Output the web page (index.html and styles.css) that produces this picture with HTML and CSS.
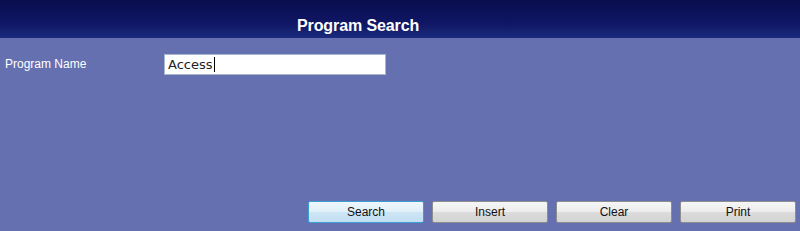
FILE: index.html
```html
<!DOCTYPE html>
<html>

<head>
    <meta charset="UTF-8">
    <title>Program Search</title>
    <link rel="stylesheet" href="styles.css">
</head>

<body>
    <div class="header">
        <h1 class="title">Program Search</h1>
    </div>
    <div class="main">
        <div class="row">
            <label class="label" for="progName">Program Name</label>
            <div class="field"><span class="txt">Access</span><span class="caret"></span></div>
        </div>
        <div class="buttons">
            <a href="javascript:;" class="btn focus">Search</a>
            <a href="javascript:;" class="btn">Insert</a>
            <a href="javascript:;" class="btn">Clear</a>
            <a href="javascript:;" class="btn">Print</a>
        </div>
    </div>
</body>

</html>
```

FILE: styles.css
```css
* {
    margin: 0;
    padding: 0;
    list-style: none;
    text-decoration: none;
}

html, body {
    height: 100%;
}

body {
    font-family: "Liberation Sans", Arial, sans-serif;
    background-color: #6570b0;
    display: flex;
    flex-direction: column;
}

.header {
    height: 38px;
    background: linear-gradient(#0a0e4f, #0f1663 60%, #1b2a7c);
    display: flex;
    align-items: flex-end;
    padding-left: 297px;
}

.title {
    color: #fff;
    font-size: 16px;
    font-weight: bold;
    line-height: 18px;
    padding-bottom: 3px;
    letter-spacing: -0.1px;
}

.main {
    flex: 1;
    display: flex;
    flex-direction: column;
    justify-content: space-between;
    padding: 16px 4px 8px 5px;
}

.row {
    display: flex;
    align-items: center;
}

.label {
    width: 159px;
    color: #fff;
    font-size: 12px;
    margin-top: -2px;
}

.field {
    width: 217px;
    height: 19px;
    background-color: #fff;
    border: solid 1px #a9b6cf;
    display: flex;
    align-items: center;
    padding-left: 3px;
    font-family: "DejaVu Sans", sans-serif;
    font-size: 13px;
    color: #222;
}

.caret {
    width: 1px;
    height: 15px;
    background-color: #000;
    margin-left: 1px;
}

.buttons {
    display: flex;
    justify-content: flex-end;
    gap: 8px;
}

.btn {
    display: block;
    width: 114px;
    height: 20px;
    line-height: 20px;
    text-align: center;
    font-size: 12px;
    color: #111;
    border: solid 1px #8d8d8d;
    border-radius: 2px;
    background: linear-gradient(#f6f6f6, #ececec 50%, #dcdcdc 51%, #d3d3d3);
}

.btn.focus {
    border-color: #3c9fd4;
    background: linear-gradient(#eef7fc, #e0eff8 50%, #cde6f5 51%, #c3dff2);
}
```
